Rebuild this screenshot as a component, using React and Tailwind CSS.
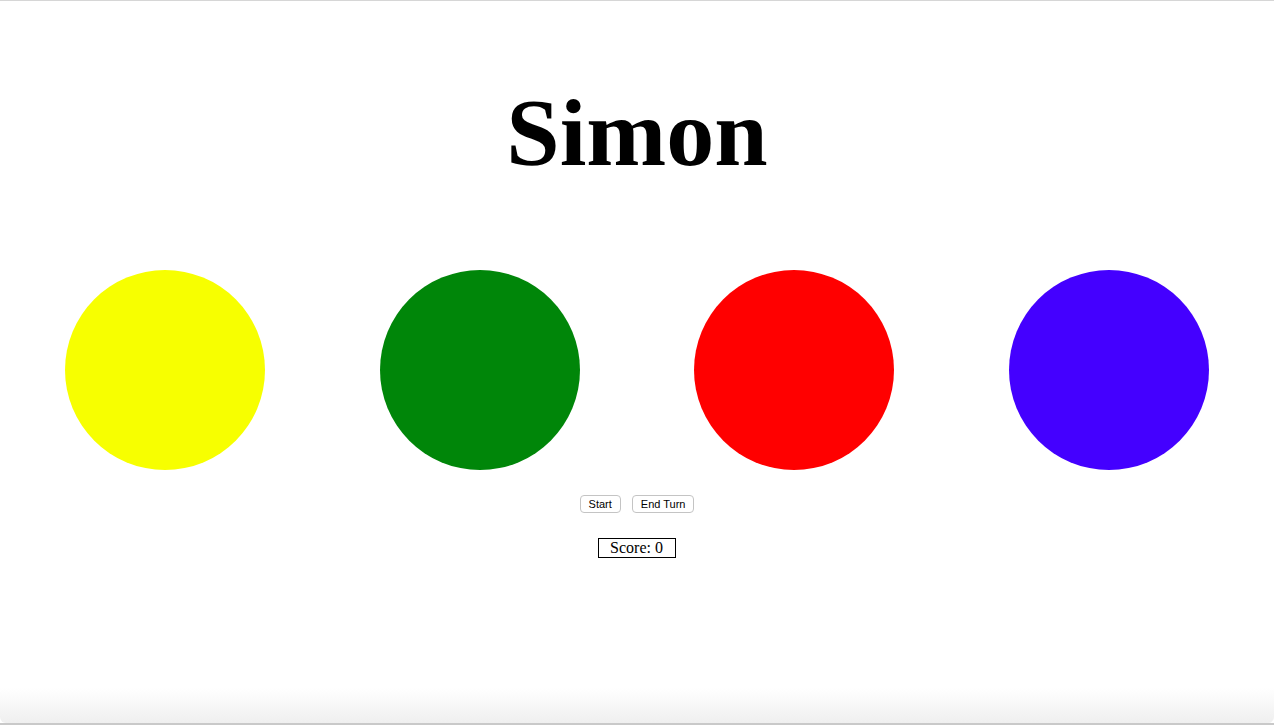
import React, { useState } from "react";

const colors = ["bg-[#f7ff00]", "bg-[#008609]", "bg-[#ff0000]", "bg-[#4400ff]"];

function App() {
  const [score, setScore] = useState(0);

  return (
    <div className="h-screen flex flex-col bg-white border-t border-[#d6d6d6]">
      <div className="flex-1">
        <h1
          className="text-center font-bold text-[96px] leading-none pt-[84px]"
          style={{ fontFamily: '"Liberation Serif", "Times New Roman", serif' }}
        >
          Simon
        </h1>

        <div className="flex justify-around px-2 mt-[89px]">
          {colors.map((c) => (
            <div key={c} className={`w-[200px] h-[200px] rounded-full ${c}`} />
          ))}
        </div>

        <div
          className="flex justify-center gap-[11px] mt-[25px]"
          style={{ fontFamily: '"Liberation Sans", Arial, sans-serif' }}
        >
          <button className="h-[18px] px-2 text-[11px] leading-none border border-[#c4c4c4] rounded-[4px] bg-white text-black">
            Start
          </button>
          <button
            onClick={() => setScore(0)}
            className="h-[18px] px-2 text-[11px] leading-none border border-[#c4c4c4] rounded-[4px] bg-white text-black"
          >
            End Turn
          </button>
        </div>

        <div className="flex justify-center mt-[25px]">
          <div
            className="border border-black pl-[11px] pr-[12px] text-[16px] leading-[18px]"
            style={{ fontFamily: '"Liberation Serif", "Times New Roman", serif' }}
          >
            Score: {score}
          </div>
        </div>
      </div>
      <div className="h-[35px] bg-gradient-to-b from-white to-[#efefef] rounded-b-[6px]" />
      <div className="h-[2px] bg-[#c9c9c9]" />
    </div>
  );
}

export default App;
